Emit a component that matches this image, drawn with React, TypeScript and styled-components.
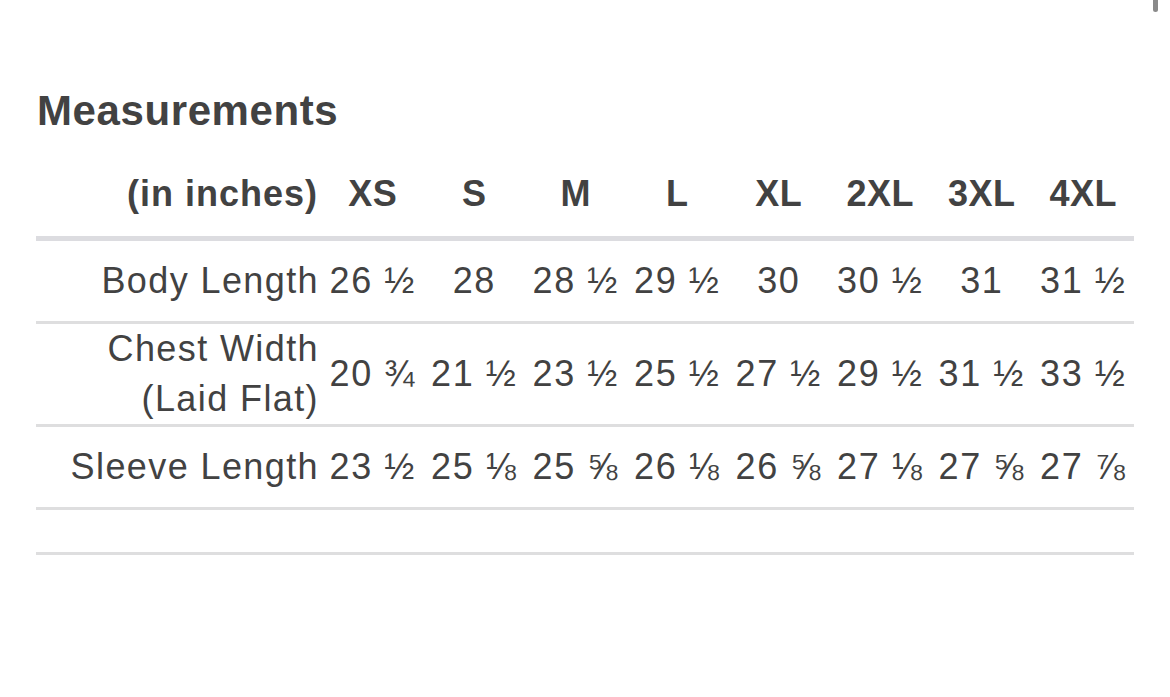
import styled, { createGlobalStyle } from "styled-components";

const SIZES = ["XS", "S", "M", "L", "XL", "2XL", "3XL", "4XL"] as const;

interface MeasureRow {
  label: string[];
  values: string[];
}

const ROWS: MeasureRow[] = [
  {
    label: ["Body Length"],
    values: ["26 ½", "28", "28 ½", "29 ½", "30", "30 ½", "31", "31 ½"],
  },
  {
    label: ["Chest Width", "(Laid Flat)"],
    values: ["20 ¾", "21 ½", "23 ½", "25 ½", "27 ½", "29 ½", "31 ½", "33 ½"],
  },
  {
    label: ["Sleeve Length"],
    values: ["23 ½", "25 ⅛", "25 ⅝", "26 ⅛", "26 ⅝", "27 ⅛", "27 ⅝", "27 ⅞"],
  },
];

const GlobalStyle = createGlobalStyle`
  html, body {
    margin: 0;
    padding: 0;
    background: #ffffff;
  }
  body {
    font-family: "Liberation Sans", Arial, sans-serif;
    color: #424242;
  }
`;

const App = () => {
  return (
    <>
      <GlobalStyle />
      <ScrollThumb />
      <Page>
        <Title>Measurements</Title>
        <Table>
          <colgroup>
            <LabelCol />
            {SIZES.map((size) => (
              <SizeCol key={size} />
            ))}
          </colgroup>
          <thead>
            <tr>
              <HeadLabel>(in inches)</HeadLabel>
              {SIZES.map((size) => (
                <HeadCell key={size}>{size}</HeadCell>
              ))}
            </tr>
          </thead>
          <tbody>
            {ROWS.map((row) => (
              <Row key={row.label.join(" ")}>
                <LabelCell>
                  {row.label.map((line) => (
                    <div key={line}>{line}</div>
                  ))}
                </LabelCell>
                {row.values.map((value, i) => (
                  <ValueCell key={i}>{value}</ValueCell>
                ))}
              </Row>
            ))}
            <Row>
              <EmptyCell colSpan={SIZES.length + 1} />
            </Row>
          </tbody>
        </Table>
      </Page>
    </>
  );
};

export default App;

const ScrollThumb = styled.div`
  position: fixed;
  top: -6px;
  right: 12px;
  width: 5px;
  height: 18px;
  border-radius: 3px;
  background: #8a8a8a;
`;

const Page = styled.div`
  padding: 86px 36px 0 36px;
`;

const Title = styled.h2`
  margin: 0 0 18px 1px;
  font-size: 42px;
  line-height: 50px;
  font-weight: bold;
  letter-spacing: 0.6px;
  color: #424242;
`;

const Table = styled.table`
  width: 1098px;
  border-collapse: collapse;
  table-layout: fixed;
  font-size: 36px;
  line-height: 50px;
`;

const LabelCol = styled.col`
  width: 286px;
`;

const SizeCol = styled.col`
  width: 101.5px;
`;

const HeadLabel = styled.th`
  padding: 15px 4px 17px 0;
  text-align: right;
  font-weight: bold;
  letter-spacing: 1px;
  border-bottom: 5px solid #dcdce0;
  white-space: nowrap;
`;

const HeadCell = styled.th`
  padding: 15px 0 17px 0;
  text-align: center;
  font-weight: bold;
  letter-spacing: 0.5px;
  border-bottom: 5px solid #dcdce0;
`;

const Row = styled.tr`
  border-bottom: 3px solid #dededf;
`;

const LabelCell = styled.td`
  padding: 0 3px 0 0;
  text-align: right;
  letter-spacing: 1.4px;
  white-space: nowrap;
  vertical-align: middle;
`;

const ValueCell = styled.td`
  padding: 15px 0;
  text-align: center;
  letter-spacing: 1.6px;
  white-space: nowrap;
  vertical-align: middle;
`;

const EmptyCell = styled.td`
  height: 42px;
  padding: 0;
`;
